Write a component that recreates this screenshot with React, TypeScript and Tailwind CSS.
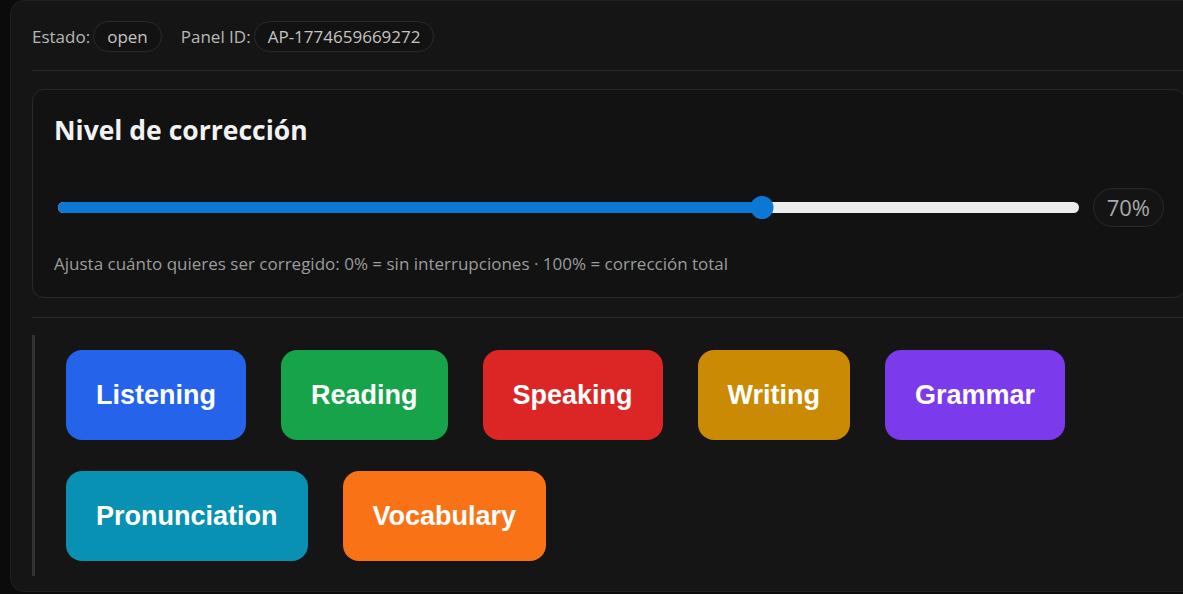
import { useState } from "react";

const SKILLS = [
  { label: "Listening", cls: "bg-[#2563eb]" },
  { label: "Reading", cls: "bg-[#16a34a]" },
  { label: "Speaking", cls: "bg-[#dc2626]" },
  { label: "Writing", cls: "bg-[#ca8a04]" },
  { label: "Grammar", cls: "bg-[#7c3aed]" },
  { label: "Pronunciation", cls: "bg-[#0891b2]" },
  { label: "Vocabulary", cls: "bg-[#f97316]" },
];

function Pill({ children }: { children: React.ReactNode }) {
  return (
    <span className="inline-flex h-[31px] items-center rounded-full border border-[#2a2a2a] bg-[#121212] px-[13px] text-[#c4c4c4]">
      {children}
    </span>
  );
}

export default function App() {
  const [level] = useState(70);

  return (
    <div className="h-[594px] w-[1183px] overflow-hidden bg-[#0b0b0b] font-['Open_Sans',sans-serif]">
      <div className="ml-[10px] flex h-[592px] w-[1198px] flex-col rounded-l-[14px] border border-[#222] bg-[#151515] px-[21px] pt-[20px]">
        {/* status row */}
        <div className="flex items-center text-[17px] text-[#b8b8b8]">
          <span>Estado:</span>
          <span className="ml-[3px]">
            <Pill>open</Pill>
          </span>
          <span className="ml-[19px]">Panel ID:</span>
          <span className="ml-[3px]">
            <Pill>AP-1774659669272</Pill>
          </span>
        </div>

        <div className="mt-[18px] h-px bg-[#2a2a2a]" />

        {/* correction card */}
        <div className="mt-[18px] h-[209px] rounded-[12px] border border-[#2a2a2a] bg-[#121212] px-[21px] pt-[24px]">
          <h2 className="text-[26.5px] font-bold leading-[32px] text-[#f2f2f2]">
            Nivel de corrección
          </h2>
          <div className="mt-[42px] flex items-center gap-[14px]">
            <div className="relative ml-[4px] h-[23px] flex-1">
              <div className="absolute inset-x-0 top-[6px] h-[11px] rounded-full bg-[#ececec]" />
              <div
                className="absolute left-0 top-[6px] h-[11px] rounded-full bg-[#0a78d4]"
                style={{ width: `${level}%` }}
              />
              <div
                className="absolute top-0 h-[23px] w-[23px] -translate-x-1/2 rounded-full bg-[#0a78d4]"
                style={{ left: `calc(${level}% - 10px)` }}
              />
            </div>
            <span className="inline-flex h-[39px] items-center rounded-full border border-[#2a2a2a] bg-[#141414] px-[13px] text-[22px] text-[#a9a9a9]">
              {level}%
            </span>
          </div>
          <p className="mt-[25px] text-[17px] leading-[23px] text-[#9c9c9c]">
            Ajusta cuánto quieres ser corregido: 0% = sin interrupciones · 100% = corrección total
          </p>
        </div>

        <div className="mt-[19px] h-px bg-[#2a2a2a]" />

        {/* skills */}
        <div className="mt-[17px] border-l-[3px] border-[#333] py-[15px] pl-[31px]">
          <div className="flex w-[1010px] flex-wrap gap-x-[35px] gap-y-[31px]">
            {SKILLS.map((s) => (
              <button
                key={s.label}
                type="button"
                className={`h-[90px] rounded-[16px] px-[30px] font-['Liberation_Sans',Arial,sans-serif] text-[27px] font-bold text-white ${s.cls}`}
              >
                {s.label}
              </button>
            ))}
          </div>
        </div>
      </div>
    </div>
  );
}
